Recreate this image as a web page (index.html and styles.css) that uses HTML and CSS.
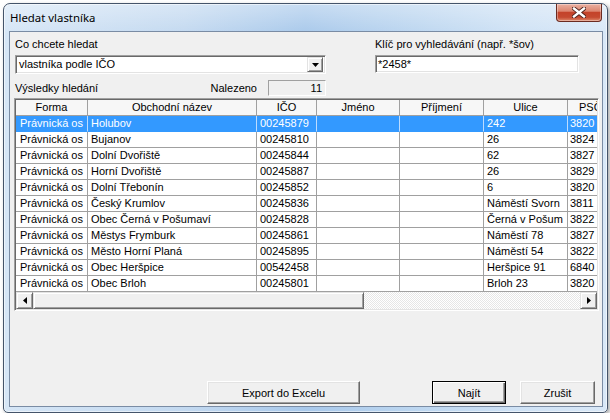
FILE: index.html
```html
<!DOCTYPE html>
<html lang="cs">
<head>
<meta charset="utf-8">
<title>Hledat vlastníka</title>
<link rel="stylesheet" href="styles.css">
</head>
<body>
<div class="window">
  <div class="titlebar">
    <span class="title">Hledat vlastníka</span>
    <div class="close">
      <svg width="14" height="11" viewBox="0 0 14 11">
        <path d="M2 1.5 L12 9.5 M12 1.5 L2 9.5" stroke="#4a1f18" stroke-width="4.2" stroke-linecap="square"/>
        <path d="M2 1.5 L12 9.5 M12 1.5 L2 9.5" stroke="#fff" stroke-width="2.4" stroke-linecap="square"/>
      </svg>
    </div>
  </div>
  <div class="client">
    <div class="top">
      <div class="col-left">
        <div class="label">Co chcete hledat</div>
        <div class="combo">
          <span class="combo-text">vlastníka podle IČO</span>
          <div class="drop">
            <svg width="7" height="4" viewBox="0 0 7 4"><path d="M0 0 H7 L3.5 4 Z" fill="#000"/></svg>
          </div>
        </div>
        <div class="results-row">
          <span class="results-label">Výsledky hledání</span>
          <span class="found-label">Nalezeno</span>
          <div class="found-box">11</div>
        </div>
      </div>
      <div class="col-right">
        <div class="label">Klíč pro vyhledávání (např. *šov)</div>
        <div class="input">*2458*</div>
      </div>
    </div>

    <div class="grid">
      <div class="grid-body">
        <div class="row head">
          <div class="cell c1">Forma</div>
          <div class="cell c2">Obchodní název</div>
          <div class="cell c3">IČO</div>
          <div class="cell c4">Jméno</div>
          <div class="cell c5">Příjmení</div>
          <div class="cell c6">Ulice</div>
          <div class="cell c7">PSČ</div>
        </div>
        <div class="row selected">
          <div class="cell c1">Právnická os</div><div class="cell c2">Holubov</div><div class="cell c3">00245879</div><div class="cell c4"></div><div class="cell c5"></div><div class="cell c6">242</div><div class="cell c7">3820</div>
        </div>
        <div class="row">
          <div class="cell c1">Právnická os</div><div class="cell c2">Bujanov</div><div class="cell c3">00245810</div><div class="cell c4"></div><div class="cell c5"></div><div class="cell c6">26</div><div class="cell c7">3824</div>
        </div>
        <div class="row">
          <div class="cell c1">Právnická os</div><div class="cell c2">Dolní Dvořiště</div><div class="cell c3">00245844</div><div class="cell c4"></div><div class="cell c5"></div><div class="cell c6">62</div><div class="cell c7">3827</div>
        </div>
        <div class="row">
          <div class="cell c1">Právnická os</div><div class="cell c2">Horní Dvořiště</div><div class="cell c3">00245887</div><div class="cell c4"></div><div class="cell c5"></div><div class="cell c6">26</div><div class="cell c7">3829</div>
        </div>
        <div class="row">
          <div class="cell c1">Právnická os</div><div class="cell c2">Dolní Třebonín</div><div class="cell c3">00245852</div><div class="cell c4"></div><div class="cell c5"></div><div class="cell c6">6</div><div class="cell c7">3820</div>
        </div>
        <div class="row">
          <div class="cell c1">Právnická os</div><div class="cell c2">Český Krumlov</div><div class="cell c3">00245836</div><div class="cell c4"></div><div class="cell c5"></div><div class="cell c6">Náměstí Svorn</div><div class="cell c7">3811</div>
        </div>
        <div class="row">
          <div class="cell c1">Právnická os</div><div class="cell c2">Obec Černá v Pošumaví</div><div class="cell c3">00245828</div><div class="cell c4"></div><div class="cell c5"></div><div class="cell c6">Černá v Pošum</div><div class="cell c7">3822</div>
        </div>
        <div class="row">
          <div class="cell c1">Právnická os</div><div class="cell c2">Městys Frymburk</div><div class="cell c3">00245861</div><div class="cell c4"></div><div class="cell c5"></div><div class="cell c6">Náměstí 78</div><div class="cell c7">3827</div>
        </div>
        <div class="row">
          <div class="cell c1">Právnická os</div><div class="cell c2">Město Horní Planá</div><div class="cell c3">00245895</div><div class="cell c4"></div><div class="cell c5"></div><div class="cell c6">Náměstí 54</div><div class="cell c7">3822</div>
        </div>
        <div class="row">
          <div class="cell c1">Právnická os</div><div class="cell c2">Obec Heršpice</div><div class="cell c3">00542458</div><div class="cell c4"></div><div class="cell c5"></div><div class="cell c6">Heršpice 91</div><div class="cell c7">6840</div>
        </div>
        <div class="row">
          <div class="cell c1">Právnická os</div><div class="cell c2">Obec Brloh</div><div class="cell c3">00245801</div><div class="cell c4"></div><div class="cell c5"></div><div class="cell c6">Brloh 23</div><div class="cell c7">3820</div>
        </div>
      </div>
      <div class="hscroll">
        <div class="sbtn"><svg width="4" height="7" viewBox="0 0 4 7"><path d="M4 0 V7 L0 3.5 Z" fill="#000"/></svg></div>
        <div class="thumb"></div>
        <div class="track"></div>
        <div class="sbtn"><svg width="4" height="7" viewBox="0 0 4 7"><path d="M0 0 V7 L4 3.5 Z" fill="#000"/></svg></div>
      </div>
    </div>

    <div class="buttons">
      <div class="btn export">Export do Excelu</div>
      <div class="btn default find">Najít</div>
      <div class="btn cancel">Zrušit</div>
    </div>
  </div>
</div>
</body>
</html>
```

FILE: styles.css
```css
* { box-sizing: border-box; }

body {
  margin: 0;
  background: #ffffff;
  font-family: "Liberation Sans", Arial, sans-serif;
  font-size: 11px;
  color: #000;
}

.window {
  margin: 3px 0 0 3px;
  width: 605px;
  height: 410px;
  border: 1px solid #44546a;
  border-radius: 7px 7px 5px 5px;
  background:
    linear-gradient(180deg, rgba(255,255,255,0.35), rgba(255,255,255,0) 30px),
    linear-gradient(90deg, #d6e6f6 0%, #c3d9f0 30%, #a9c9eb 50%, #b9d4ef 65%, #cfe2f5 85%, #d9e8f7 100%);
  box-shadow: inset 0 0 0 1px rgba(255,255,255,0.55), 2px 2px 4px rgba(0,0,0,0.35);
  padding: 0 4px 5px 5px;
  display: flex;
  flex-direction: column;
}

.titlebar {
  height: 27px;
  display: flex;
  justify-content: space-between;
  align-items: flex-start;
}

.title {
  font-family: "Noto Sans", "Open Sans", sans-serif;
  font-size: 11.4px;
  line-height: 16px;
  padding: 6px 0 0 1px;
  color: #000;
}

.close {
  width: 46px;
  height: 18px;
  margin-right: 1px;
  border: 1px solid #6b2b21;
  border-top: none;
  border-radius: 0 0 4px 4px;
  background: linear-gradient(180deg, #eab0a1 0%, #dc8670 42%, #c4432a 50%, #c54a30 78%, #df8a6c 100%);
  box-shadow: inset 0 0 0 1px rgba(255,255,255,0.35);
  display: flex;
  align-items: center;
  justify-content: center;
}

.client {
  flex: 1;
  background: #f0f0f0;
  border: 1px solid #7a8ca4;
  display: flex;
  flex-direction: column;
  padding: 6px 3px 2px 4px;
}

.top {
  display: flex;
  padding-left: 1px;
}

.col-left { width: 311px; }
.col-right { width: 204px; margin-left: 49px; }

.label {
  height: 13px;
  line-height: 13px;
  white-space: nowrap;
}

.combo {
  margin-top: 4px;
  height: 19px;
  background: #fff;
  border: 1px solid;
  border-color: #a0a0a0 #ffffff #ffffff #a0a0a0;
  box-shadow: inset 1px 1px 0 #696969, inset -1px -1px 0 #e3e3e3;
  display: flex;
  align-items: center;
  padding: 1px 2px 1px 3px;
}

.combo-text { flex: 1; line-height: 15px; }

.drop {
  width: 16px;
  height: 15px;
  background: #f0f0f0;
  border: 1px solid;
  border-color: #e3e3e3 #696969 #696969 #e3e3e3;
  box-shadow: inset 1px 1px 0 #fff, inset -1px -1px 0 #a0a0a0;
  display: flex;
  align-items: center;
  justify-content: center;
}

.results-row {
  margin-top: 6px;
  height: 16px;
  display: flex;
  align-items: center;
}

.results-label { flex: 1; }
.found-label { margin-right: 11px; }

.found-box {
  width: 58px;
  height: 16px;
  border: 1px solid;
  border-color: #a0a0a0 #ffffff #ffffff #a0a0a0;
  text-align: right;
  line-height: 14px;
  padding-right: 3px;
}

.input {
  margin-top: 4px;
  height: 18px;
  background: #fff;
  border: 1px solid;
  border-color: #a0a0a0 #ffffff #ffffff #a0a0a0;
  box-shadow: inset 1px 1px 0 #696969, inset -1px -1px 0 #e3e3e3;
  line-height: 14px;
  padding: 1px 2px;
}

.grid {
  margin-top: 2px;
  height: 213px;
  background: #fff;
  border: 1px solid;
  border-color: #a0a0a0 #ffffff #ffffff #a0a0a0;
  box-shadow: inset 1px 1px 0 #696969, inset -1px -1px 0 #e3e3e3;
  padding: 1px;
  display: flex;
  flex-direction: column;
  overflow: hidden;
}

.grid-body {
  flex: 1;
  overflow: hidden;
}

.row {
  display: flex;
  height: 16px;
}

.cell {
  flex: none;
  height: 16px;
  border-right: 1px solid #a0a0a0;
  border-bottom: 1px solid #a0a0a0;
  padding-left: 3px;
  line-height: 15px;
  white-space: nowrap;
  overflow: hidden;
}

.c1 { width: 72px; padding-left: 4px; }
.c2 { width: 169px; }
.c3 { width: 60px; }
.c4 { width: 83px; }
.c5 { width: 84px; }
.c6 { width: 84px; }
.c7 { width: 30px; padding-left: 2px; border-right: none; }

.head .cell {
  background: #f7f7f7;
  text-align: center;
  padding-left: 0;
}

.head .c7 {
  text-align: left;
  padding-left: 11px;
}

.selected .cell {
  background: #3399ff;
  color: #fff;
  border-right-color: #bcdcff;
  border-bottom-color: #3399ff;
}

.hscroll {
  height: 17px;
  display: flex;
  flex: none;
}

.sbtn, .thumb {
  background: #f0f0f0;
  border: 1px solid;
  border-color: #e3e3e3 #696969 #696969 #e3e3e3;
  box-shadow: inset 1px 1px 0 #fff, inset -1px -1px 0 #a0a0a0;
}

.sbtn {
  width: 17px;
  display: flex;
  align-items: center;
  justify-content: center;
}

.thumb { width: 331px; }

.track {
  flex: 1;
  background: repeating-conic-gradient(#ffffff 0 25%, #e6e6e6 0 50%) 0 0 / 2px 2px;
}

.buttons {
  margin-top: auto;
  display: flex;
  padding-left: 193px;
}

.btn {
  height: 23px;
  background: #f0f0f0;
  border: 1px solid;
  border-color: #ffffff #696969 #696969 #ffffff;
  box-shadow: inset -1px -1px 0 #a0a0a0, inset 1px 1px 0 #e3e3e3;
  display: flex;
  align-items: center;
  justify-content: center;
  white-space: nowrap;
}

.export { width: 153px; }
.find { width: 74px; margin-left: 72px; }
.cancel { width: 75px; margin-left: 14px; }

.btn.default {
  border-color: #000;
  box-shadow: inset 1px 1px 0 #fff, inset -1px -1px 0 #696969, inset -2px -2px 0 #a0a0a0;
}
```
